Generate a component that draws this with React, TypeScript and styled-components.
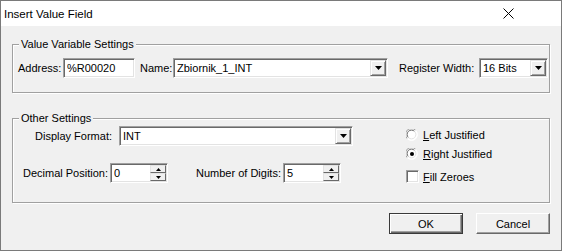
import React from "react";
import styled, { createGlobalStyle } from "styled-components";

const GlobalStyle = createGlobalStyle`
  html, body {
    margin: 0;
    padding: 0;
    background: #ffffff;
  }
  * {
    box-sizing: border-box;
  }
`;

const Window = styled.div`
  width: 562px;
  height: 251px;
  border: 1px solid #7a7a7a;
  display: flex;
  flex-direction: column;
  font-family: "Liberation Sans", Arial, sans-serif;
  font-size: 11px;
  color: #000;
`;

const TitleBar = styled.div`
  height: 25px;
  background: #ffffff;
  display: flex;
  align-items: center;
  justify-content: space-between;
  padding-left: 3px;
  padding-right: 47px;
`;

const TitleText = styled.span`
  font-size: 11.5px;
  color: #000;
`;

const Body = styled.div`
  flex: 1;
  background: #f0f0f0;
  padding: 18px 11px 0 11px;
  display: flex;
  flex-direction: column;
`;

const GroupBox = styled.div<{ $height: number; $mt?: number }>`
  position: relative;
  height: ${({ $height }) => $height}px;
  margin-top: ${({ $mt }) => $mt ?? 0}px;
  border: 1px solid #a0a0a0;
  box-shadow: 1px 1px 0 #ffffff, inset 1px 1px 0 #ffffff;
`;

const GroupTitle = styled.span`
  position: absolute;
  top: -7px;
  left: 6px;
  padding: 0 2px;
  background: #f0f0f0;
  line-height: 13px;
`;

const Row = styled.div<{ $pt: number; $pl?: number }>`
  display: flex;
  align-items: center;
  height: 20px;
  margin-top: ${({ $pt }) => $pt}px;
  padding-left: ${({ $pl }) => $pl ?? 0}px;
`;

const Label = styled.span<{ $w: number; $ml?: number }>`
  width: ${({ $w }) => $w}px;
  margin-left: ${({ $ml }) => $ml ?? 0}px;
  flex-shrink: 0;
  white-space: nowrap;
`;

const Sunken = styled.div<{ $w: number }>`
  width: ${({ $w }) => $w}px;
  height: 20px;
  flex-shrink: 0;
  display: flex;
  align-items: center;
  background: #ffffff;
  border-top: 1px solid #a0a0a0;
  border-left: 1px solid #a0a0a0;
  border-bottom: 1px solid #ffffff;
  border-right: 1px solid #ffffff;
  box-shadow: inset 1px 1px 0 #696969, inset -1px -1px 0 #e3e3e3;
  padding: 2px 2px 2px 3px;
`;

const FieldText = styled.span`
  flex: 1;
  white-space: nowrap;
  overflow: hidden;
  line-height: 14px;
`;

const DropButton = styled.div`
  width: 16px;
  height: 16px;
  margin-right: -1px;
  background: #f0f0f0;
  border-top: 1px solid #e3e3e3;
  border-left: 1px solid #e3e3e3;
  border-bottom: 1px solid #696969;
  border-right: 1px solid #696969;
  box-shadow: inset 1px 1px 0 #ffffff, inset -1px -1px 0 #a0a0a0;
  display: flex;
  align-items: center;
  justify-content: center;
`;

const SpinStack = styled.div`
  display: flex;
  flex-direction: column;
  gap: 0;
  margin-right: -1px;
`;

const SpinButton = styled.div`
  width: 16px;
  height: 8px;
  background: #f0f0f0;
  border-top: 1px solid #e3e3e3;
  border-left: 1px solid #e3e3e3;
  border-bottom: 1px solid #696969;
  border-right: 1px solid #696969;
  display: flex;
  align-items: center;
  justify-content: center;
`;

const GroupGrid = styled.div`
  display: grid;
  grid-template-columns: 393px 1fr;
  height: 100%;
`;

const Column = styled.div`
  display: flex;
  flex-direction: column;
`;

const OptionRow = styled.div<{ $mt: number }>`
  display: flex;
  align-items: center;
  height: 17px;
  margin-top: ${({ $mt }) => $mt}px;
`;

const OptionText = styled.span<{ $ml: number }>`
  margin-left: ${({ $ml }) => $ml}px;
  white-space: nowrap;
`;

const Accel = styled.span`
  text-decoration: underline;
`;

const CheckBox = styled.div`
  width: 13px;
  height: 13px;
  background: #ffffff;
  border-top: 1px solid #a0a0a0;
  border-left: 1px solid #a0a0a0;
  border-bottom: 1px solid #ffffff;
  border-right: 1px solid #ffffff;
  box-shadow: inset 1px 1px 0 #696969, inset -1px -1px 0 #e3e3e3;
`;

const ButtonRow = styled.div`
  display: flex;
  justify-content: flex-end;
  gap: 13px;
  margin-top: 10px;
`;

const DialogButton = styled.button<{ $default?: boolean }>`
  width: 74px;
  height: 21px;
  padding: 0;
  font-family: "Liberation Sans", Arial, sans-serif;
  font-size: 11px;
  color: #000;
  background: #f0f0f0;
  border: 1px solid ${({ $default }) => ($default ? "#3a3a3a" : "#696969")};
  border-top-color: ${({ $default }) => ($default ? "#3a3a3a" : "#ffffff")};
  border-left-color: ${({ $default }) => ($default ? "#3a3a3a" : "#ffffff")};
  box-shadow: ${({ $default }) =>
    $default
      ? "inset 1px 1px 0 #ffffff, inset -1px -1px 0 #696969, inset -2px -2px 0 #a0a0a0"
      : "inset -1px -1px 0 #a0a0a0"};
`;

const CloseIcon = () => (
  <svg width="11" height="11" viewBox="0 0 11 11">
    <path d="M0.5 0.5 L10.5 10.5 M10.5 0.5 L0.5 10.5" stroke="#000" strokeWidth="1" />
  </svg>
);

const DownArrow = ({ w = 7, h = 4 }: { w?: number; h?: number }) => (
  <svg width={w} height={h} viewBox={`0 0 ${w} ${h}`}>
    <path d={`M0 0 H${w} L${w / 2} ${h} Z`} fill="#000" />
  </svg>
);

const UpArrow = ({ w = 5, h = 3 }: { w?: number; h?: number }) => (
  <svg width={w} height={h} viewBox={`0 0 ${w} ${h}`}>
    <path d={`M0 ${h} H${w} L${w / 2} 0 Z`} fill="#000" />
  </svg>
);

const Radio = ({ checked }: { checked?: boolean }) => (
  <svg width="12" height="12" viewBox="0 0 12 12">
    <circle cx="6" cy="6" r="5.5" fill="#fff" />
    <path d="M1.2 9.6 A5.3 5.3 0 0 1 9.6 1.2" stroke="#a0a0a0" strokeWidth="1" fill="none" />
    <path d="M2.4 8.6 A4.2 4.2 0 0 1 8.6 2.4" stroke="#696969" strokeWidth="1" fill="none" />
    <path d="M9.6 1.2 A5.3 5.3 0 0 1 1.2 9.6" stroke="#ffffff" strokeWidth="1" fill="none" />
    <path d="M8.6 2.4 A4.2 4.2 0 0 1 2.4 8.6" stroke="#e3e3e3" strokeWidth="1" fill="none" />
    {checked && <circle cx="6" cy="6" r="2" fill="#000" />}
  </svg>
);

const Combo = ({ w, value }: { w: number; value: string }) => (
  <Sunken $w={w}>
    <FieldText>{value}</FieldText>
    <DropButton>
      <DownArrow />
    </DropButton>
  </Sunken>
);

const Spin = ({ w, value }: { w: number; value: string }) => (
  <Sunken $w={w}>
    <FieldText>{value}</FieldText>
    <SpinStack>
      <SpinButton>
        <UpArrow />
      </SpinButton>
      <SpinButton>
        <DownArrow w={5} h={3} />
      </SpinButton>
    </SpinStack>
  </Sunken>
);

export default function App() {
  return (
    <>
      <GlobalStyle />
      <Window>
        <TitleBar>
          <TitleText>Insert Value Field</TitleText>
          <CloseIcon />
        </TitleBar>
        <Body>
          <GroupBox $height={49}>
            <GroupTitle>Value Variable Settings</GroupTitle>
            <Row $pt={13} $pl={5}>
              <Label $w={45}>Address:</Label>
              <Sunken $w={72}>
                <FieldText>%R00020</FieldText>
              </Sunken>
              <Label $w={33} $ml={5}>
                Name:
              </Label>
              <Combo w={215} value="Zbiornik_1_INT" />
              <Label $w={80} $ml={11}>
                Register Width:
              </Label>
              <Combo w={69} value="16 Bits" />
            </Row>
          </GroupBox>

          <GroupBox $height={85} $mt={25}>
            <GroupTitle>Other Settings</GroupTitle>
            <GroupGrid>
              <Column>
                <Row $pt={7} $pl={22}>
                  <Label $w={84}>Display Format:</Label>
                  <Combo w={234} value="INT" />
                </Row>
                <Row $pt={17} $pl={10}>
                  <Label $w={87}>Decimal Position:</Label>
                  <Spin w={58} value="0" />
                  <Label $w={87} $ml={28}>
                    Number of Digits:
                  </Label>
                  <Spin w={58} value="5" />
                </Row>
              </Column>
              <Column>
                <OptionRow $mt={7}>
                  <Radio />
                  <OptionText $ml={5}>
                    <Accel>L</Accel>eft Justified
                  </OptionText>
                </OptionRow>
                <OptionRow $mt={2}>
                  <Radio checked />
                  <OptionText $ml={5}>
                    <Accel>R</Accel>ight Justified
                  </OptionText>
                </OptionRow>
                <OptionRow $mt={6}>
                  <CheckBox />
                  <OptionText $ml={4}>
                    <Accel>F</Accel>ill Zeroes
                  </OptionText>
                </OptionRow>
              </Column>
            </GroupGrid>
          </GroupBox>

          <ButtonRow>
            <DialogButton $default>OK</DialogButton>
            <DialogButton>Cancel</DialogButton>
          </ButtonRow>
        </Body>
      </Window>
    </>
  );
}
